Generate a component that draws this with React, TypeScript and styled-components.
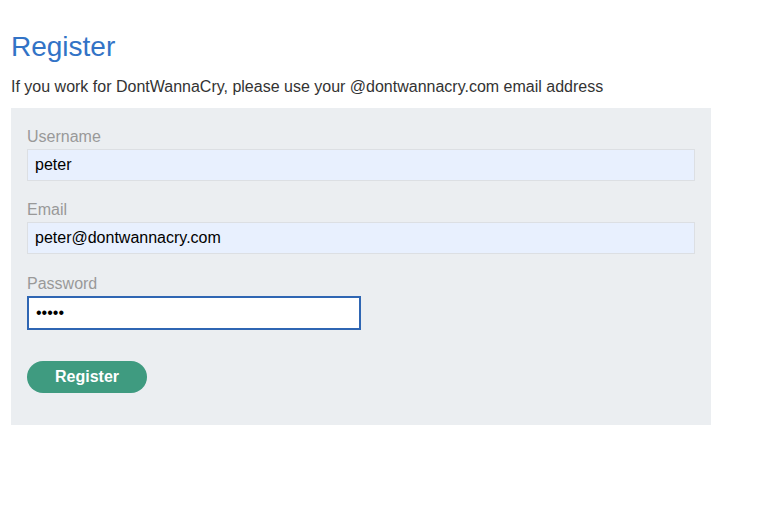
import React from "react";
import styled, { createGlobalStyle } from "styled-components";

const GlobalStyle = createGlobalStyle`
  body {
    margin: 0;
    background: #fff;
    font-family: "Liberation Sans", Arial, sans-serif;
    color: #333;
  }
`;

const Page = styled.div`
  padding: 30px 11px;
  max-width: 700px;
`;

const Title = styled.h1`
  margin: 0 0 13px;
  font-size: 28px;
  font-weight: 400;
  line-height: 34px;
  color: #3273c6;
`;

const Intro = styled.p`
  margin: 0 0 11px;
  font-size: 16px;
  line-height: 20px;
  color: #333;
`;

const Panel = styled.form`
  background: #ebeef1;
  padding: 19px 16px 32px;
  display: flex;
  flex-direction: column;
`;

const Field = styled.div`
  display: flex;
  flex-direction: column;
  gap: 2px;
  margin-bottom: 19px;

  & + & + & {
    margin-top: 1px;
  }
`;

const Label = styled.label`
  font-size: 16px;
  line-height: 20px;
  color: #999;
`;

const Input = styled.input<{ $focused?: boolean; $half?: boolean }>`
  box-sizing: border-box;
  height: ${(p) => (p.$focused ? "34px" : "32px")};
  width: ${(p) => (p.$half ? "50%" : "100%")};
  padding: 0 7px;
  font-family: "Liberation Sans", Arial, sans-serif;
  font-size: 16px;
  color: #000;
  caret-color: #000;
  outline: none;
  background: ${(p) => (p.$focused ? "#fff" : "#e8f0fe")};
  border: ${(p) => (p.$focused ? "2px solid #2f66b3" : "1px solid #dcdfe3")};
`;

const Button = styled.button`
  align-self: flex-start;
  margin-top: 12px;
  width: 120px;
  height: 32px;
  border: none;
  border-radius: 16px;
  background: #3f9b80;
  color: #fff;
  font-family: "Liberation Sans", Arial, sans-serif;
  font-size: 16px;
  font-weight: 700;
`;

export default function App() {
  return (
    <>
      <GlobalStyle />
      <Page>
        <Title>Register</Title>
        <Intro>If you work for DontWannaCry, please use your @dontwannacry.com email address</Intro>
        <Panel onSubmit={(e) => e.preventDefault()}>
          <Field>
            <Label>Username</Label>
            <Input defaultValue="peter" />
          </Field>
          <Field>
            <Label>Email</Label>
            <Input defaultValue="peter@dontwannacry.com" />
          </Field>
          <Field>
            <Label>Password</Label>
            <Input type="password" defaultValue="peter" $focused $half autoFocus />
          </Field>
          <Button type="submit">Register</Button>
        </Panel>
      </Page>
    </>
  );
}
